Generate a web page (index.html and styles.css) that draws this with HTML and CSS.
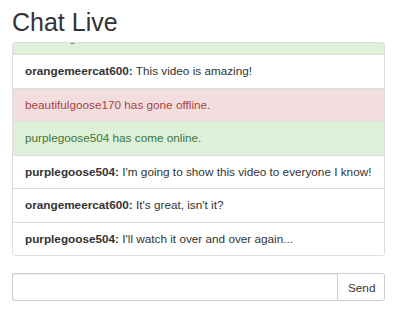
FILE: index.html
```html
<!DOCTYPE html>
<html>
<head>
<meta charset="utf-8">
<link rel="stylesheet" href="styles.css">
</head>
<body>
<div class="page">
  <h1 class="title">Chat Live</h1>
  <div class="chat">
    <div class="list">
      <div class="item success">beautifulgoose170 has come online.</div>
      <div class="item"><b>orangemeercat600:</b> This video is amazing!</div>
      <div class="item danger">beautifulgoose170 has gone offline.</div>
      <div class="item success">purplegoose504 has come online.</div>
      <div class="item"><b>purplegoose504:</b> I'm going to show this video to everyone I know!</div>
      <div class="item"><b>orangemeercat600:</b> It's great, isn't it?</div>
      <div class="item"><b>purplegoose504:</b> I'll watch it over and over again...</div>
    </div>
  </div>
  <form class="compose">
    <input class="field" type="text">
    <button class="send" type="button">Send</button>
  </form>
</div>
</body>
</html>
```
FILE: styles.css
```css
html, body {
  margin: 0;
  padding: 0;
  background: #fff;
}
body {
  font-family: "Liberation Sans", Arial, sans-serif;
  color: #333;
  font-size: 11.76px;
}
.page {
  padding: 0 15px 0 12px;
}
.title {
  margin: 9px 0 6px;
  font-size: 25px;
  line-height: 27px;
  font-weight: 400;
  color: #333;
}
.chat {
  height: 212px;
  border: 1px solid #ddd;
  border-radius: 3px;
  overflow: hidden;
  display: flex;
  flex-direction: column;
  justify-content: flex-end;
}
.list {
  display: flex;
  flex-direction: column;
}
.item {
  padding: 8px 12px;
  line-height: 16.5px;
  border-top: 1px solid #ddd;
  background: #fff;
  white-space: nowrap;
}
.item b {
  font-weight: 700;
}
.success {
  background: #dff0d8;
  color: #3c763d;
}
.danger {
  background: #f2dede;
  color: #a94442;
}
.compose {
  margin: 17px 0 0;
  display: flex;
  height: 28px;
}
.field {
  flex: 1;
  margin: 0;
  height: 28px;
  box-sizing: border-box;
  border: 1px solid #ccc;
  border-right: none;
  border-radius: 3px 0 0 3px;
  box-shadow: inset 0 1px 1px rgba(0,0,0,.075);
  padding: 5px 10px;
  font-family: inherit;
  font-size: 11.76px;
  outline: none;
}
.send {
  margin: 0;
  height: 28px;
  box-sizing: border-box;
  width: 48px;
  border: 1px solid #ccc;
  border-radius: 0 3px 3px 0;
  background: #fff;
  color: #333;
  font-family: inherit;
  font-size: 11.76px;
  padding: 0 10px;
}
```
